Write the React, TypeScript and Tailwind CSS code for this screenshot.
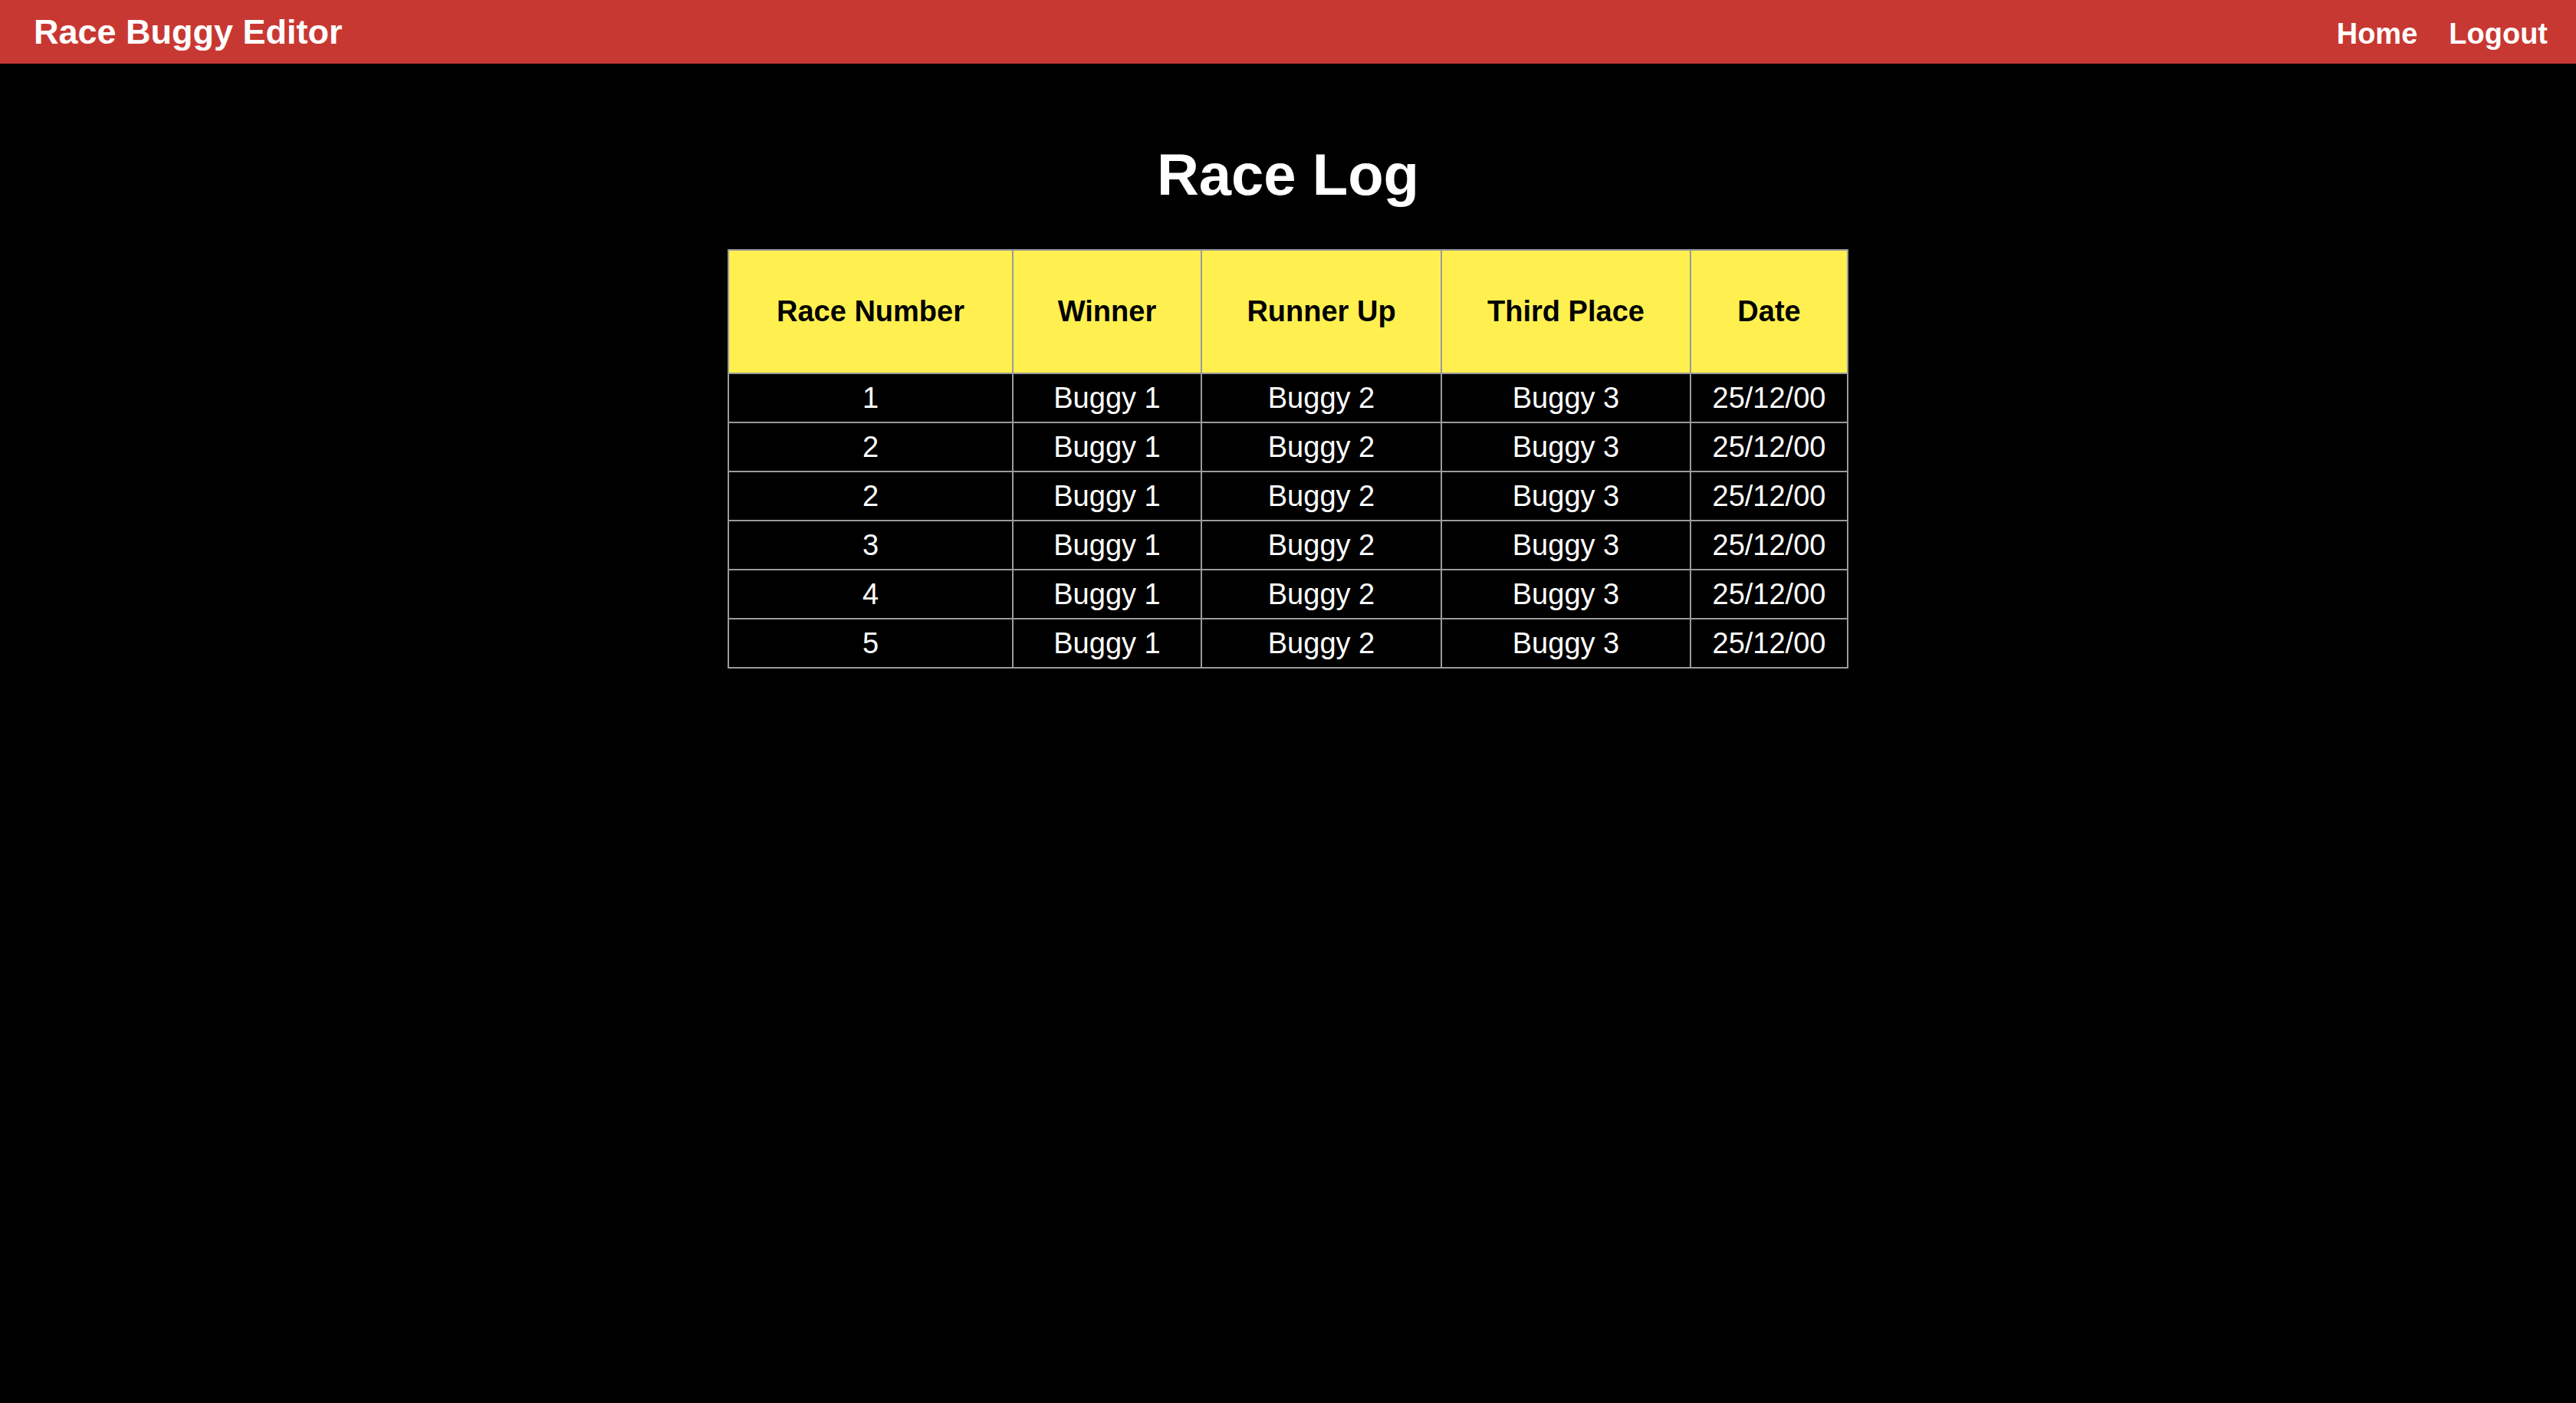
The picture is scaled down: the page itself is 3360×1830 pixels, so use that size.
const races = [
  { num: 1, winner: "Buggy 1", runnerUp: "Buggy 2", third: "Buggy 3", date: "25/12/00" },
  { num: 2, winner: "Buggy 1", runnerUp: "Buggy 2", third: "Buggy 3", date: "25/12/00" },
  { num: 2, winner: "Buggy 1", runnerUp: "Buggy 2", third: "Buggy 3", date: "25/12/00" },
  { num: 3, winner: "Buggy 1", runnerUp: "Buggy 2", third: "Buggy 3", date: "25/12/00" },
  { num: 4, winner: "Buggy 1", runnerUp: "Buggy 2", third: "Buggy 3", date: "25/12/00" },
  { num: 5, winner: "Buggy 1", runnerUp: "Buggy 2", third: "Buggy 3", date: "25/12/00" },
];

const headings = ["Race Number", "Winner", "Runner Up", "Third Place", "Date"];

function Navbar() {
  return (
    <header className="h-[83px] bg-[#c83832] flex items-center justify-between pl-[44px] pr-[37px]">
      <a href="/" className="text-white font-bold text-[45px] leading-none">
        Race Buggy Editor
      </a>
      <nav className="flex items-center gap-[41px] text-white font-bold text-[38px] leading-none pt-[5px]">
        <a href="/">Home</a>
        <a href="/logout">Logout</a>
      </nav>
    </header>
  );
}

export default function App() {
  return (
    <div
      className="min-h-screen bg-black text-white"
      style={{ fontFamily: '"Liberation Sans", Arial, Helvetica, sans-serif' }}
    >
      <Navbar />
      <main className="flex flex-col items-center">
        <h1 className="mt-[101px] mb-[53px] text-[76px] leading-[88px] font-bold">Race Log</h1>
        <table className="table-fixed w-[1460px] border-collapse border-2 border-[#9a9a9a]">
          <colgroup>
            <col className="w-[371px]" />
            <col className="w-[246px]" />
            <col className="w-[313px]" />
            <col className="w-[325px]" />
            <col className="w-[205px]" />
          </colgroup>
          <thead>
            <tr className="bg-[#fff050] text-black">
              {headings.map((h) => (
                <th
                  key={h}
                  className="border-2 border-[#9a9a9a] py-[57px] text-[38px] leading-[45px] font-bold text-center whitespace-nowrap"
                >
                  {h}
                </th>
              ))}
            </tr>
          </thead>
          <tbody>
            {races.map((r, i) => (
              <tr key={i} className="text-[38px] leading-[44px]">
                <td className="border-2 border-[#9a9a9a] py-[9px] text-center">{r.num}</td>
                <td className="border-2 border-[#9a9a9a] py-[9px] text-center">{r.winner}</td>
                <td className="border-2 border-[#9a9a9a] py-[9px] text-center">{r.runnerUp}</td>
                <td className="border-2 border-[#9a9a9a] py-[9px] text-center">{r.third}</td>
                <td className="border-2 border-[#9a9a9a] py-[9px] text-center">{r.date}</td>
              </tr>
            ))}
          </tbody>
        </table>
      </main>
    </div>
  );
}
